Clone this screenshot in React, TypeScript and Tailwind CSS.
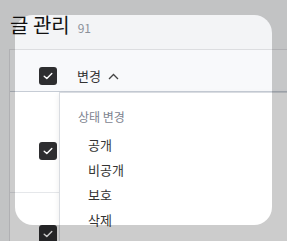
function Check() {
  return (
    <span className="flex h-[18px] w-[18px] shrink-0 items-center justify-center rounded-[3px] bg-[#2e2e30]">
      <svg width="10" height="8" viewBox="0 0 10 8" fill="none">
        <path d="M1.2 4.2 3.8 6.6 8.8 1.4" stroke="#fff" strokeWidth="1.4" strokeLinecap="round" strokeLinejoin="round" />
      </svg>
    </span>
  );
}

const items = ["공개", "비공개", "보호", "삭제"];

export default function App() {
  return (
    <div
      className="relative h-[241px] w-[287px] overflow-hidden bg-[#f3f4f6]"
      style={{ fontFamily: '"Noto Sans CJK KR", "Noto Sans", sans-serif' }}
    >
      <div className="flex items-baseline pl-[10px] pt-[13px]">
        <span className="text-[20px] leading-[24px] text-[#111]">글 관리</span>
        <span className="ml-[8px] text-[12px] text-[#8b9099]">91</span>
      </div>

      <div className="ml-[9px] mt-[12px] w-[400px] border-l border-t border-[#dcdde0] bg-white">
        <div className="flex h-[42px] items-start border-b border-[#c6ccd5] bg-[#f8f9fb] pl-[29px] pt-[17px]">
          <Check />
          <span className="ml-[20px] flex items-center gap-[7px] text-[13px] leading-[18px] text-[#333]">
            변경
            <svg width="11" height="7" viewBox="0 0 11 7" fill="none">
              <path d="M1 6 5.5 1.5 10 6" stroke="#444" strokeWidth="1.3" />
            </svg>
          </span>
        </div>
        <div className="h-[101px] border-b border-[#e5e7ea] pl-[29px] pt-[50px]">
          <Check />
        </div>
        <div className="h-[60px] pl-[29px] pt-[32px]">
          <Check />
        </div>
      </div>

      <div className="absolute left-[59px] top-[92px] h-[200px] w-[260px] border border-[#d9dce1] bg-white shadow-[0_2px_6px_rgba(0,0,0,0.08)]">
        <div className="pl-[18px] pt-[15px] text-[12px] leading-[18px] text-[#7d8390]">상태 변경</div>
        <ul className="mt-[6px]">
          {items.map((t) => (
            <li key={t} className="h-[25px] pl-[28px] text-[13px] leading-[25px] text-[#333]">
              {t}
            </li>
          ))}
        </ul>
      </div>

      <div className="pointer-events-none absolute left-[15px] top-[15px] h-[210px] w-[257px] rounded-[18px] shadow-[0_0_0_999px_rgba(0,0,0,0.2)]" />
    </div>
  );
}
